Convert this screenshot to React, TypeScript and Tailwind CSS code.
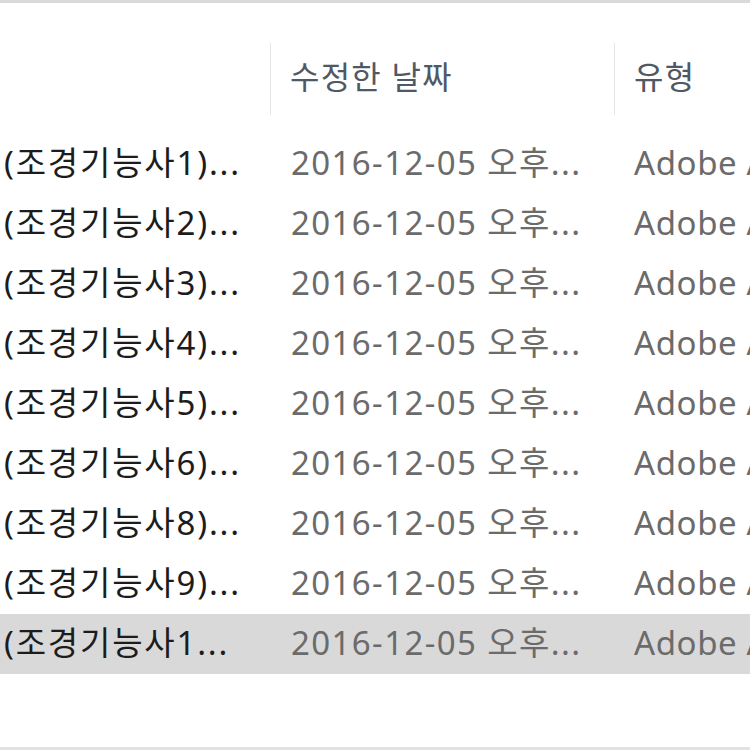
import React from "react";

const names = [
  "(조경기능사1)...",
  "(조경기능사2)...",
  "(조경기능사3)...",
  "(조경기능사4)...",
  "(조경기능사5)...",
  "(조경기능사6)...",
  "(조경기능사8)...",
  "(조경기능사9)...",
  "(조경기능사1...",
];

export default function App() {
  return (
    <div
      className="w-[750px] h-[750px] bg-white flex flex-col overflow-hidden"
      style={{ fontFamily: '"Noto Sans", "Noto Sans CJK KR", sans-serif' }}
    >
      <div className="h-[3px] bg-[#dadada]" />
      <div className="h-[40px]" />
      <div className="grid grid-cols-[271px_344px_1fr] h-[72px] text-[32px] tracking-[1.2px] text-[#4f5963]">
        <div className="border-r border-[#e6e6e6]" />
        <div className="border-r border-[#e6e6e6] pl-[19px] pb-[4px] flex items-center">수정한 날짜</div>
        <div className="pl-[19px] pb-[4px] flex items-center whitespace-nowrap">유형</div>
      </div>
      <div className="h-[19px]" />
      <div className="flex flex-col">
        {names.map((n, i) => (
          <div
            key={i}
            className={`grid grid-cols-[271px_344px_1fr] h-[60px] items-center text-[33px] tracking-[1.4px] whitespace-nowrap ${
              i === 8 ? "bg-[#d9d9d9]" : ""
            }`}
          >
            <div className="pl-[4px] pb-[2px] text-[#1c1c1c] tracking-[1.8px]">{n}</div>
            <div className="pl-[20px] pb-[2px] text-[#6b6b6b]">2016-12-05 오후...</div>
            <div className="pl-[19px] pb-[2px] text-[#6b6b6b] overflow-hidden tracking-[0.6px]">Adobe Acrobat</div>
          </div>
        ))}
      </div>
      <div className="flex-1" />
      <div className="h-[3px] bg-[#e2e2e2]" />
    </div>
  );
}
